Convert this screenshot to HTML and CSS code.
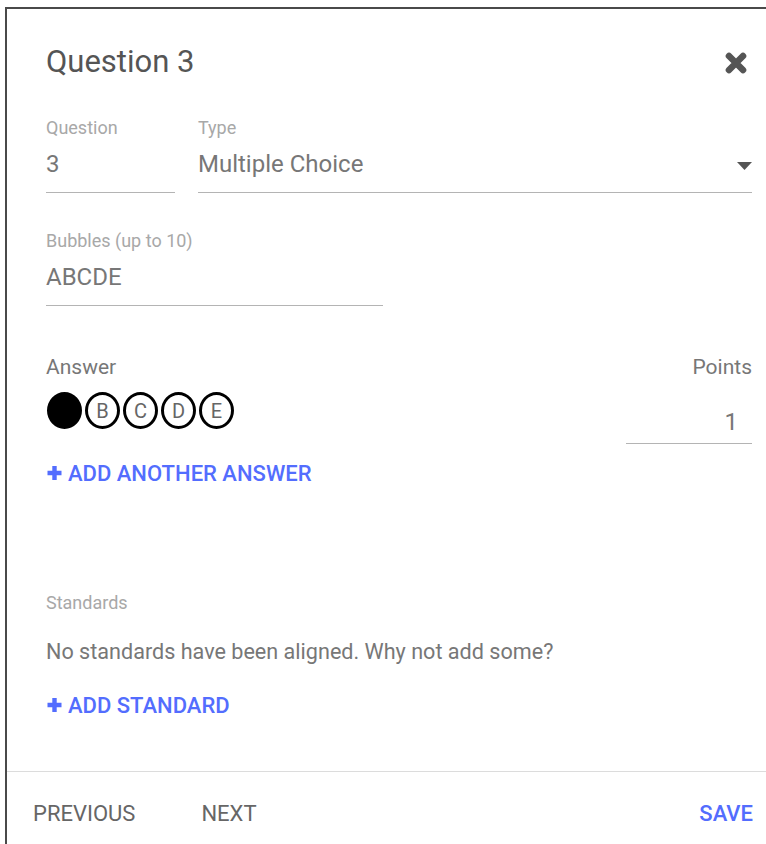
FILE: index.html
```html
<!DOCTYPE html>
<html lang="en">
<head>
<meta charset="utf-8">
<title>Question 3</title>
<link rel="stylesheet" href="styles.css">
</head>
<body>
<div class="dialog">
  <div class="dialog-body">
    <div class="dialog-header">
      <h1 class="dialog-title">Question 3</h1>
      <button class="close-btn" aria-label="Close">
        <svg viewBox="0 0 24 24" width="24" height="24"><path d="M5 5 L19 19 M19 5 L5 19" stroke="#555" stroke-width="6.6" stroke-linecap="round" fill="none"/></svg>
      </button>
    </div>

    <div class="field-row">
      <div class="field field-number">
        <div class="field-label">Question</div>
        <div class="field-input">3</div>
      </div>
      <div class="field field-type">
        <div class="field-label">Type</div>
        <div class="field-input select">
          <span>Multiple Choice</span>
          <svg class="caret" viewBox="0 0 15 8" width="15" height="8"><path d="M0 0 H15 L7.5 8 Z" fill="#555"/></svg>
        </div>
      </div>
    </div>

    <div class="field field-bubbles">
      <div class="field-label">Bubbles (up to 10)</div>
      <div class="field-input">ABCDE</div>
    </div>

    <div class="answer-row">
      <div class="answer-col">
        <div class="section-label">Answer</div>
        <div class="bubbles">
          <span class="bubble filled"></span>
          <span class="bubble">B</span>
          <span class="bubble">C</span>
          <span class="bubble">D</span>
          <span class="bubble">E</span>
        </div>
      </div>
      <div class="points-col">
        <div class="section-label">Points</div>
        <div class="points-input">1</div>
      </div>
    </div>

    <a class="link-btn add-answer" href="#">
      <svg viewBox="0 0 16 16" width="17" height="16"><path d="M8 1 V15 M1 8 H15" stroke="currentColor" stroke-width="4.4" fill="none"/></svg>
      <span>ADD ANOTHER ANSWER</span>
    </a>

    <div class="standards">
      <div class="field-label">Standards</div>
      <p class="standards-empty">No standards have been aligned. Why not add some?</p>
      <a class="link-btn" href="#">
        <svg viewBox="0 0 16 16" width="17" height="16"><path d="M8 1 V15 M1 8 H15" stroke="currentColor" stroke-width="4.4" fill="none"/></svg>
        <span>ADD STANDARD</span>
      </a>
    </div>
  </div>

  <div class="dialog-footer">
    <button class="footer-btn">PREVIOUS</button>
    <button class="footer-btn">NEXT</button>
    <button class="footer-btn primary">SAVE</button>
  </div>
</div>
</body>
</html>
```

FILE: styles.css
```css
html, body {
  margin: 0;
  padding: 0;
  height: 100%;
  background: #fff;
  font-family: Roboto, "Liberation Sans", sans-serif;
  overflow: hidden;
}

.dialog {
  margin: 7px 0 0 5px;
  height: calc(100% - 7px);
  border-top: 2px solid #4a4a4a;
  border-left: 2px solid #4a4a4a;
  box-sizing: border-box;
}

.dialog-body {
  padding: 35px 14px 0 39px;
}

.dialog-header {
  display: flex;
  align-items: center;
  justify-content: space-between;
}

.dialog-title {
  margin: 0;
  font-size: 31px;
  line-height: 36px;
  font-weight: 400;
  color: #555;
}

.close-btn {
  border: 0;
  background: none;
  padding: 0;
  margin: 1px 4px 0 0;
  width: 24px;
  height: 24px;
  display: flex;
}

.field-row {
  display: flex;
  gap: 23px;
  margin-top: 38px;
}

.field-label {
  font-size: 18px;
  line-height: 20px;
  color: #a8a8a8;
}

.field-input {
  margin-top: 12px;
  padding-bottom: 14px;
  border-bottom: 1px solid #b4b4b4;
  font-size: 24px;
  line-height: 28px;
  color: #777;
}

.field-number {
  width: 129px;
}

.field-type {
  flex: 1;
}

.select {
  display: flex;
  align-items: center;
  justify-content: space-between;
}

.caret {
  margin-top: 4px;
}

.field-bubbles {
  width: 337px;
  margin-top: 38px;
}

.answer-row {
  display: flex;
  justify-content: space-between;
  margin-top: 49px;
}

.section-label {
  font-size: 21px;
  line-height: 24px;
  color: #777;
}

.bubbles {
  display: flex;
  gap: 3px;
  margin-top: 13px;
  margin-left: 1px;
}

.bubble {
  width: 35px;
  height: 37px;
  box-sizing: border-box;
  border: 3px solid #000;
  border-radius: 50%;
  display: flex;
  align-items: center;
  justify-content: center;
  font-size: 20px;
  color: #666;
}

.bubble.filled {
  background: #000;
}

.points-col {
  width: 126px;
  text-align: right;
}

.points-input {
  margin-top: 29px;
  padding: 0 14px 7px 0;
  border-bottom: 1px solid #b4b4b4;
  font-size: 24px;
  line-height: 28px;
  color: #777;
}

.link-btn {
  display: flex;
  align-items: center;
  gap: 5px;
  width: max-content;
  margin-top: 18px;
  font-size: 22px;
  line-height: 24px;
  font-weight: 500;
  color: #536dfe;
  text-decoration: none;
}

.link-btn svg {
  margin-top: -2px;
}

.standards {
  margin-top: 107px;
}

.standards-empty {
  margin: 27px 0 0;
  font-size: 21.6px;
  line-height: 24px;
  color: #777;
}

.standards .link-btn {
  margin-top: 30px;
}

.dialog-footer {
  margin-top: 53px;
  border-top: 1px solid #dcdcdc;
  display: flex;
  align-items: center;
  padding: 30px 13px 0 26px;
  gap: 66px;
}

.footer-btn {
  border: 0;
  background: none;
  padding: 0;
  font-family: inherit;
  font-size: 22px;
  line-height: 24px;
  color: #666;
}

.footer-btn.primary {
  margin-left: auto;
  color: #536dfe;
  font-weight: 500;
}
```
